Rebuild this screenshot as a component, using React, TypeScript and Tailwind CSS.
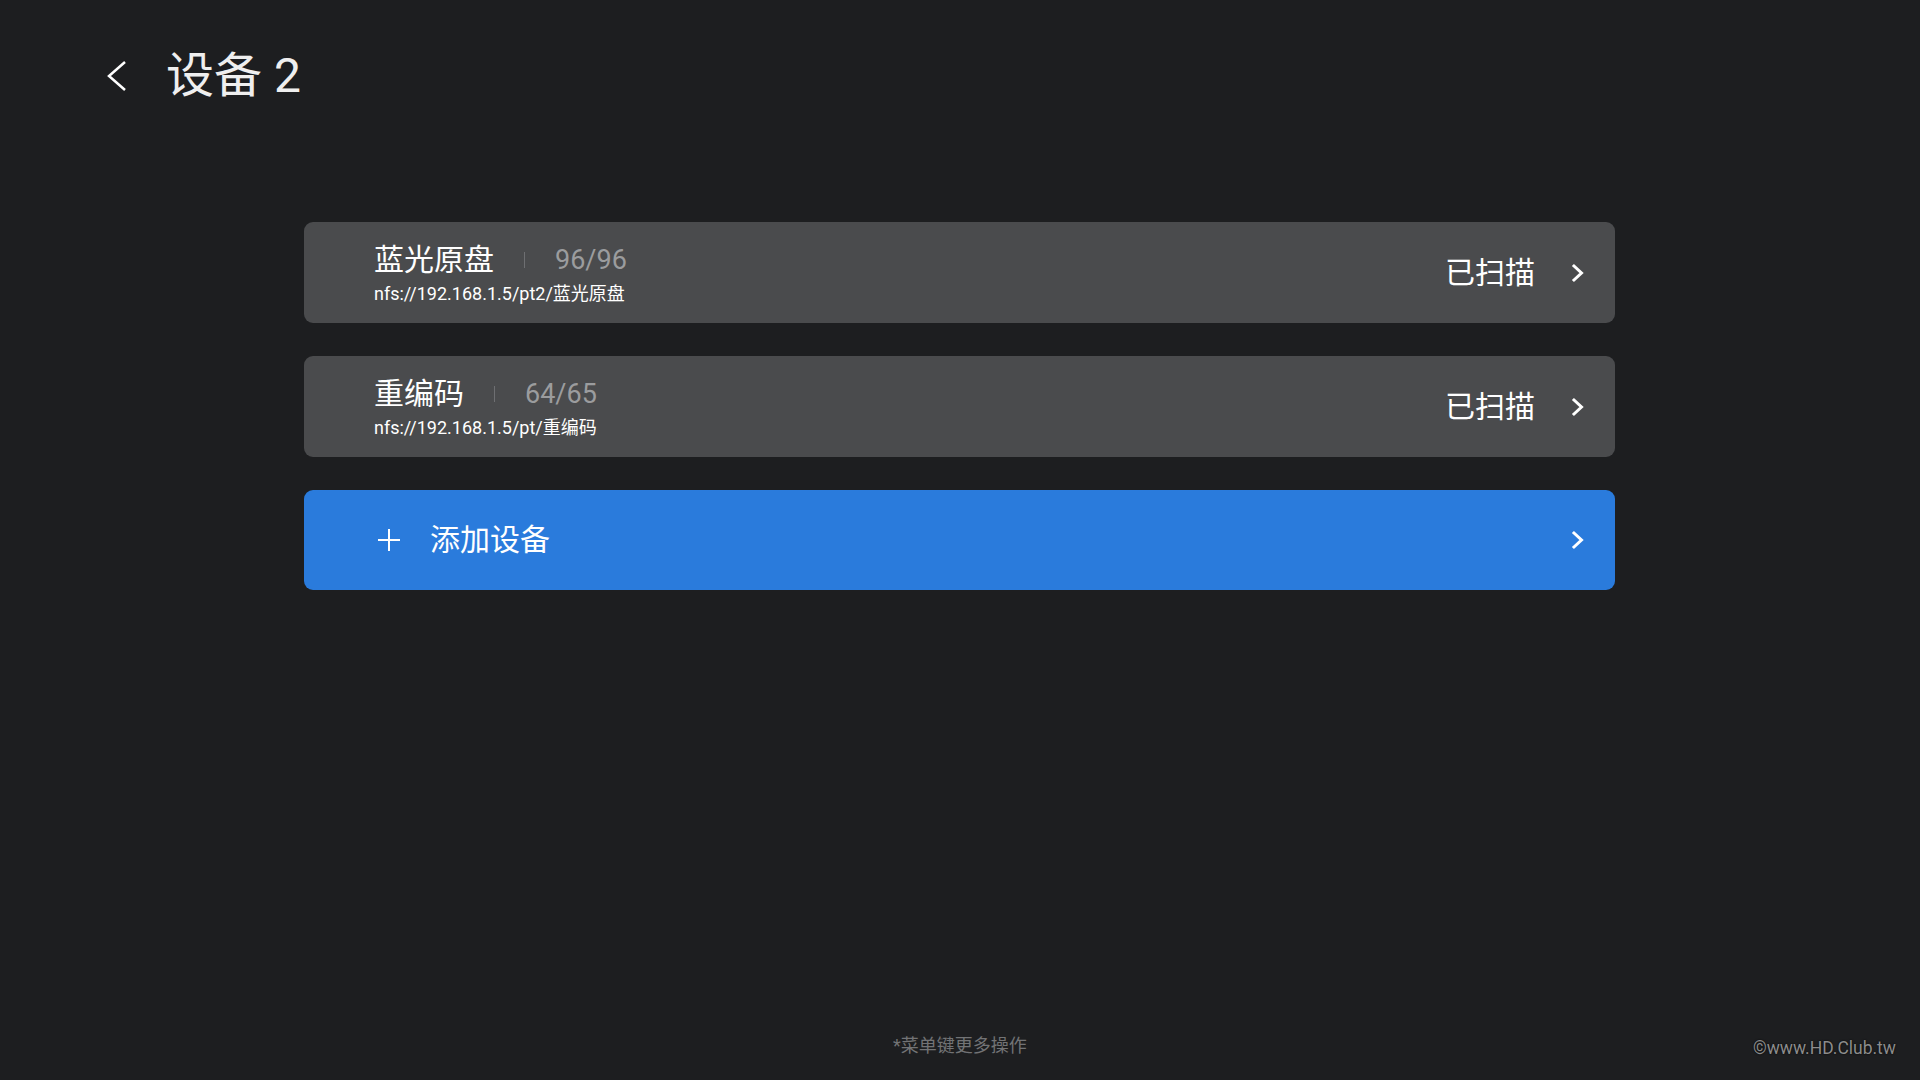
const font = { fontFamily: 'Roboto, "Noto Sans CJK SC", sans-serif' };

interface DeviceRowProps {
  name: string;
  count: string;
  path: string;
}

function Chevron() {
  return (
    <svg width="14" height="20" viewBox="0 0 14 20" className="shrink-0">
      <polyline
        points="3,3 10.5,10 3,17"
        fill="none"
        stroke="#ffffff"
        strokeWidth="3"
        strokeLinecap="square"
      />
    </svg>
  );
}

function DeviceRow({ name, count, path }: DeviceRowProps) {
  return (
    <div className="flex h-[101px] items-center rounded-[9px] bg-[#4a4b4d] pl-[70px] pr-[30px]">
      <div className="flex flex-1 flex-col pt-[2px]">
        <div className="flex items-center">
          <span className="text-[30px] leading-[36px] text-white">{name}</span>
          <span className="mx-[30px] h-[16px] w-px bg-[#6e6f72]" />
          <span className="text-[27px] leading-[36px] text-[#9b9c9e]">{count}</span>
        </div>
        <span className="mt-[5px] text-[18px] leading-[22px] text-white">{path}</span>
      </div>
      <span className="mr-[36px] text-[30px] leading-[36px] text-white">已扫描</span>
      <Chevron />
    </div>
  );
}

export default function App() {
  return (
    <div className="flex min-h-screen flex-col bg-[#1d1e20]" style={font}>
      {/* Header */}
      <div className="flex items-center pl-[104px] pt-[52px]">
        <svg width="26" height="36" viewBox="0 0 26 36">
          <polyline
            points="21,4 5,18 21,32"
            fill="none"
            stroke="#ffffff"
            strokeWidth="2.5"
          />
        </svg>
        <h1 className="ml-[36px] text-[48px] font-normal leading-[48px] text-[#efefef]">
          设备 2
        </h1>
      </div>

      {/* Device list */}
      <div className="ml-[304px] mt-[122px] flex w-[1311px] flex-col gap-[33px]">
        <DeviceRow name="蓝光原盘" count="96/96" path="nfs://192.168.1.5/pt2/蓝光原盘" />
        <DeviceRow name="重编码" count="64/65" path="nfs://192.168.1.5/pt/重编码" />
        <div className="flex h-[100px] items-center rounded-[9px] bg-[#2a7bdc] pl-[73px] pr-[30px]">
          <svg width="24" height="24" viewBox="0 0 24 24" className="shrink-0">
            <line x1="12" y1="1" x2="12" y2="23" stroke="#ffffff" strokeWidth="2" />
            <line x1="1" y1="12" x2="23" y2="12" stroke="#ffffff" strokeWidth="2" />
          </svg>
          <span className="ml-[29px] flex-1 text-[30px] leading-[36px] text-white">添加设备</span>
          <Chevron />
        </div>
      </div>

      {/* Footer */}
      <div className="flex-1" />
      <div className="relative pb-[22px]">
        <p className="text-center text-[18px] leading-[24px] text-[#727375]">*菜单键更多操作</p>
        <span
          className="absolute bottom-[22px] right-[24px] text-[17.5px] leading-[20px] text-[#8c8c8c]"
          style={{ textShadow: "0 0 2px #000" }}
        >
          ©www.HD.Club.tw
        </span>
      </div>
    </div>
  );
}
